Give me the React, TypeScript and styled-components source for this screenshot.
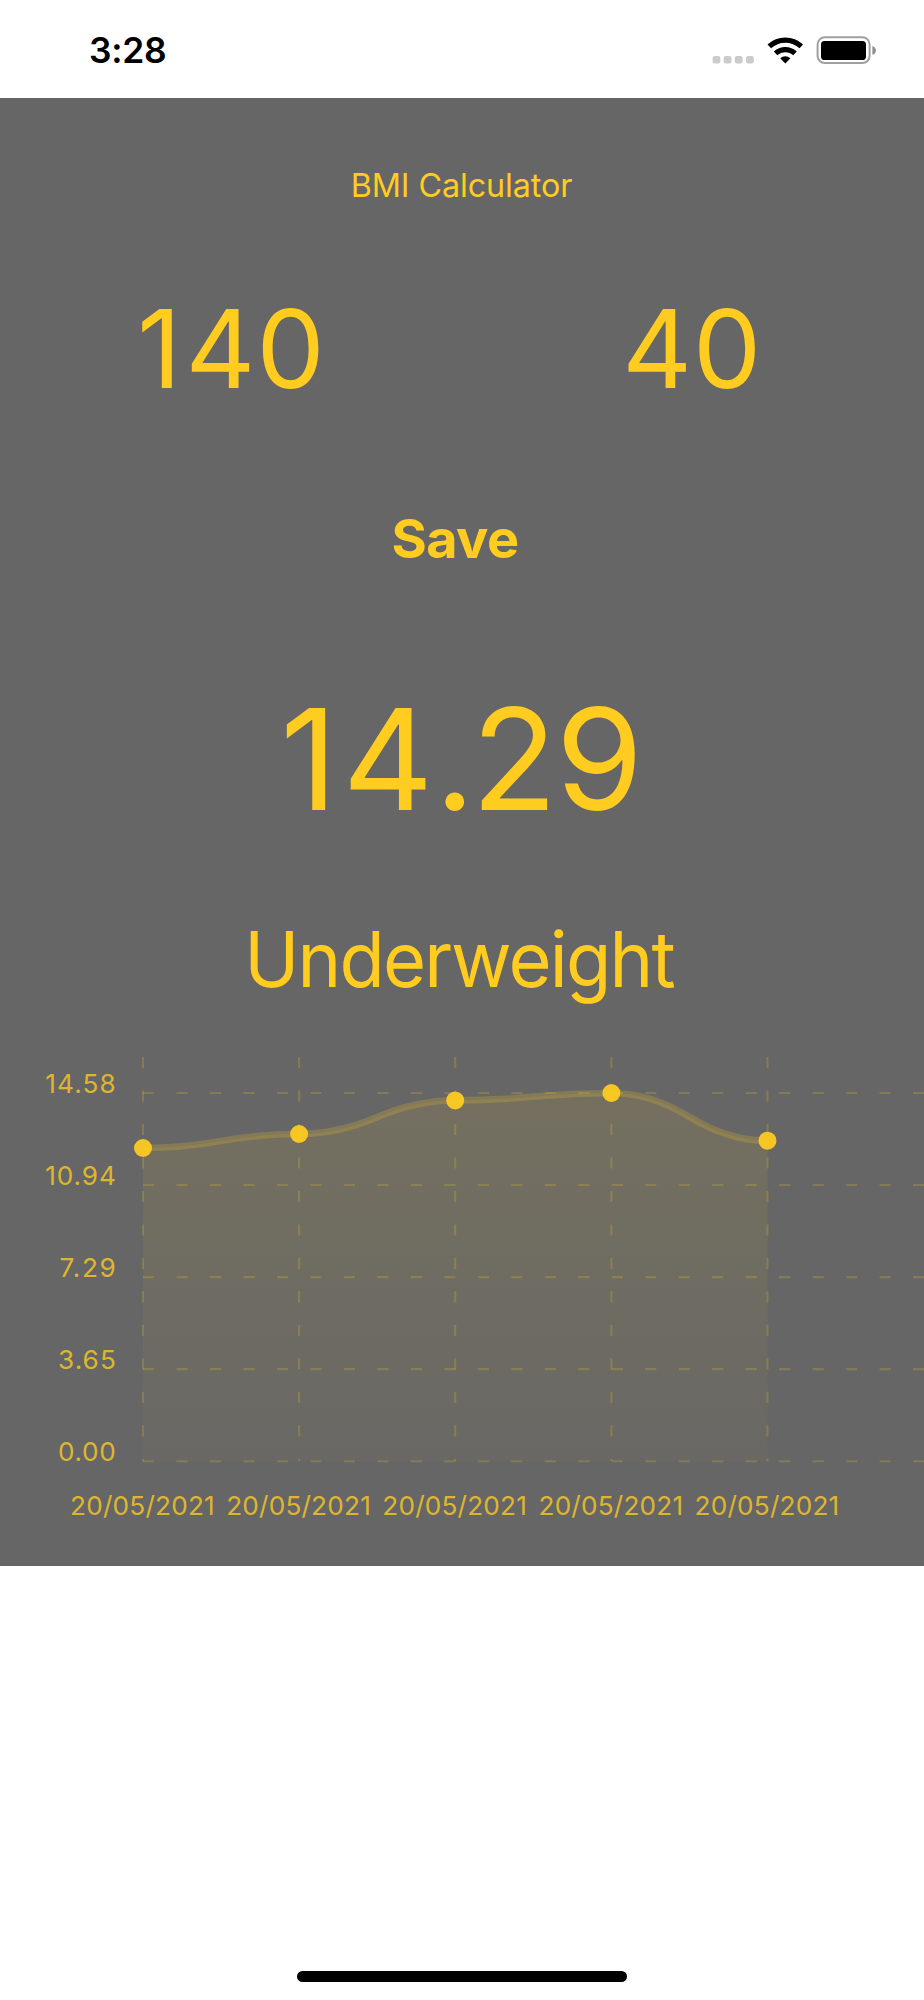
import React from "react";
import styled, { createGlobalStyle } from "styled-components";

const YELLOW = "#ffcc1f";
const GREY = "#666666";
const FONT = 'Inter, "Liberation Sans", sans-serif';

const GlobalStyle = createGlobalStyle`
  body { margin: 0; background: #fff; font-family: ${FONT}; }
`;

const Screen = styled.div`
  display: flex;
  flex-direction: column;
  width: 924px;
  height: 2000px;
  overflow: hidden;
  background: #fff;
`;

const StatusBar = styled.header`
  display: flex;
  justify-content: space-between;
  height: 98px;
  box-sizing: border-box;
  padding: 30px 48px 0 89px;
`;

const Time = styled.span`
  font-size: 35.4px;
  font-weight: 600;
  line-height: 42px;
  letter-spacing: -0.3px;
  color: #000;
`;

const Panel = styled.main`
  display: flex;
  flex-direction: column;
  height: 1468px;
  box-sizing: border-box;
  padding-top: 68px;
  background: ${GREY};
  color: ${YELLOW};
`;

const Label = styled.div<{ $size: number; $height: number; $gap?: number; $spacing?: number; $shift?: number }>`
  flex: none;
  margin-top: ${(p) => p.$gap ?? 0}px;
  padding-right: ${(p) => p.$shift ?? 0}px;
  font-size: ${(p) => p.$size}px;
  line-height: ${(p) => p.$height}px;
  letter-spacing: ${(p) => p.$spacing ?? 0}px;
  text-align: center;
  white-space: nowrap;
`;

const Category = styled(Label)`
  transform: scaleX(0.97);
`;

const Kern = styled.span<{ $by: number }>`
  letter-spacing: ${(p) => p.$by}px;
`;

const Inputs = styled.div`
  display: grid;
  grid-template-columns: 1fr 1fr;
  margin-top: 83px;
`;

const SaveButton = styled.button`
  align-self: center;
  height: 60px;
  margin: 100px 14px 0 0;
  padding: 0;
  border: 0;
  background: none;
  color: inherit;
  font: 700 54px/60px ${FONT};
  letter-spacing: -0.6px;
`;

const ChartSvg = styled.svg`
  display: block;
  flex: none;
  margin-top: 22px;
`;

const ChartText = styled.text`
  font-family: ${FONT};
  font-size: 26.2px;
  fill: ${YELLOW};
  fill-opacity: 0.8;
`;

const Footer = styled.footer`
  display: flex;
  flex: 1;
  align-items: flex-end;
  justify-content: center;
  padding-bottom: 18px;
`;

const HomeIndicator = styled.div`
  width: 330px;
  height: 11px;
  border-radius: 6px;
  background: #000;
`;

const POINTS = [
  { x: 143, y: 127, date: "20/05/2021" },
  { x: 299.1, y: 113, date: "20/05/2021" },
  { x: 455.2, y: 79.4, date: "20/05/2021" },
  { x: 611.4, y: 72, date: "20/05/2021" },
  { x: 767.5, y: 119.7, date: "20/05/2021" },
];

const LEVELS = [
  { y: 72, label: "14.58", width: 70.5 },
  { y: 164, label: "10.94", width: 70.5 },
  { y: 256.1, label: "7.29", width: 56.3 },
  { y: 348.1, label: "3.65", width: 57.8 },
  { y: 440.2, label: "0.00", width: 57.8 },
];

const curve = POINTS.slice(1).reduce((d, p, i) => {
  const a = POINTS[i];
  const mx = (a.x + p.x) / 2;
  const my = (a.y + p.y) / 2;
  return `${d} Q${(a.x + mx) / 2},${a.y} ${mx},${my} Q${(p.x + mx) / 2},${p.y} ${p.x},${p.y}`;
}, `M${POINTS[0].x},${POINTS[0].y}`);

function Chart() {
  const grid = { stroke: YELLOW, strokeOpacity: 0.2, strokeWidth: 2.1, strokeDasharray: "11.16 22.32" };
  return (
    <ChartSvg width="924" height="540" viewBox="0 0 924 540">
      <defs>
        <linearGradient id="area" gradientUnits="userSpaceOnUse" x1="0" y1="0" x2="0" y2="540">
          <stop offset="0" stopColor={YELLOW} stopOpacity="0.11" />
          <stop offset="1" stopColor={YELLOW} stopOpacity="0" />
        </linearGradient>
      </defs>
      {LEVELS.map((l) => (
        <line key={l.label} x1="143" x2="924" y1={l.y} y2={l.y} {...grid} />
      ))}
      {POINTS.map((p) => (
        <line key={p.x} x1={p.x} x2={p.x} y1="36" y2="440.2" {...grid} />
      ))}
      {LEVELS.map((l) => (
        <ChartText key={l.label} x="115.8" y={l.y} textAnchor="end" textLength={l.width}>
          {l.label}
        </ChartText>
      ))}
      {POINTS.map((p) => (
        <ChartText key={p.x} x={p.x - 0.6} y="494" textAnchor="middle" textLength="144.6">
          {p.date}
        </ChartText>
      ))}
      <path d={curve} fill="none" stroke={YELLOW} strokeOpacity="0.2" strokeWidth="6.7" />
      <path d={`${curve} L767.5,440.2 L143,440.2 Z`} fill="url(#area)" />
      {POINTS.map((p) => (
        <circle key={p.x} cx={p.x} cy={p.y} r="9" fill={YELLOW} fillOpacity="0.93" />
      ))}
    </ChartSvg>
  );
}

function StatusIcons() {
  return (
    <svg width="168" height="40" viewBox="708 30 168 40">
      {[712.6, 723.7, 734.8, 746].map((x) => (
        <rect key={x} x={x} y="55.9" width="7.8" height="7.6" rx="2.2" fill="#cbcbcb" />
      ))}
      <path d="M785.3 63.4l-5.1-5.2a7.4 7.4 0 0 1 10.2 0z" />
      <g fill="none" stroke="#000" strokeWidth="5.2">
        <path d="M775.6 53.4a14.2 14.2 0 0 1 19.4 0" />
        <path d="M769.3 46.4a23.6 23.6 0 0 1 32 0" />
      </g>
      <rect x="817.6" y="37.3" width="52" height="25.8" rx="7.2" fill="none" stroke="#a0a0a0" strokeWidth="2" />
      <rect x="821" y="41" width="45" height="19" rx="3.6" />
      <path d="M872.4 46c4.6 1.2 4.6 7.6 0 8.8z" fill="#8f8f8f" />
    </svg>
  );
}

export default function App() {
  return (
    <Screen>
      <GlobalStyle />
      <StatusBar>
        <Time>3:28</Time>
        <StatusIcons />
      </StatusBar>
      <Panel>
        <Label $size={32.3} $height={40} $spacing={-0.1} $shift={1}>BMI Calculator</Label>
        <Inputs>
          <Label $size={108.2} $height={120}>
            <Kern $by={4.2}>1</Kern><Kern $by={1}>4</Kern>0
          </Label>
          <Label $size={108.2} $height={120} $shift={2.5}>
            <Kern $by={0.8}>4</Kern>0
          </Label>
        </Inputs>
        <SaveButton>Save</SaveButton>
        <Label $size={140.8} $height={140} $gap={120} $shift={0.8}>
          <Kern $by={4.9}>1</Kern><Kern $by={1.1}>4</Kern><Kern $by={-3.7}>.</Kern><Kern $by={-1.5}>2</Kern>9
        </Label>
        <Category $size={76.3} $height={80} $gap={90} $spacing={-1.85} $shift={6}>Underweight</Category>
        <Chart />
      </Panel>
      <Footer>
        <HomeIndicator />
      </Footer>
    </Screen>
  );
}
